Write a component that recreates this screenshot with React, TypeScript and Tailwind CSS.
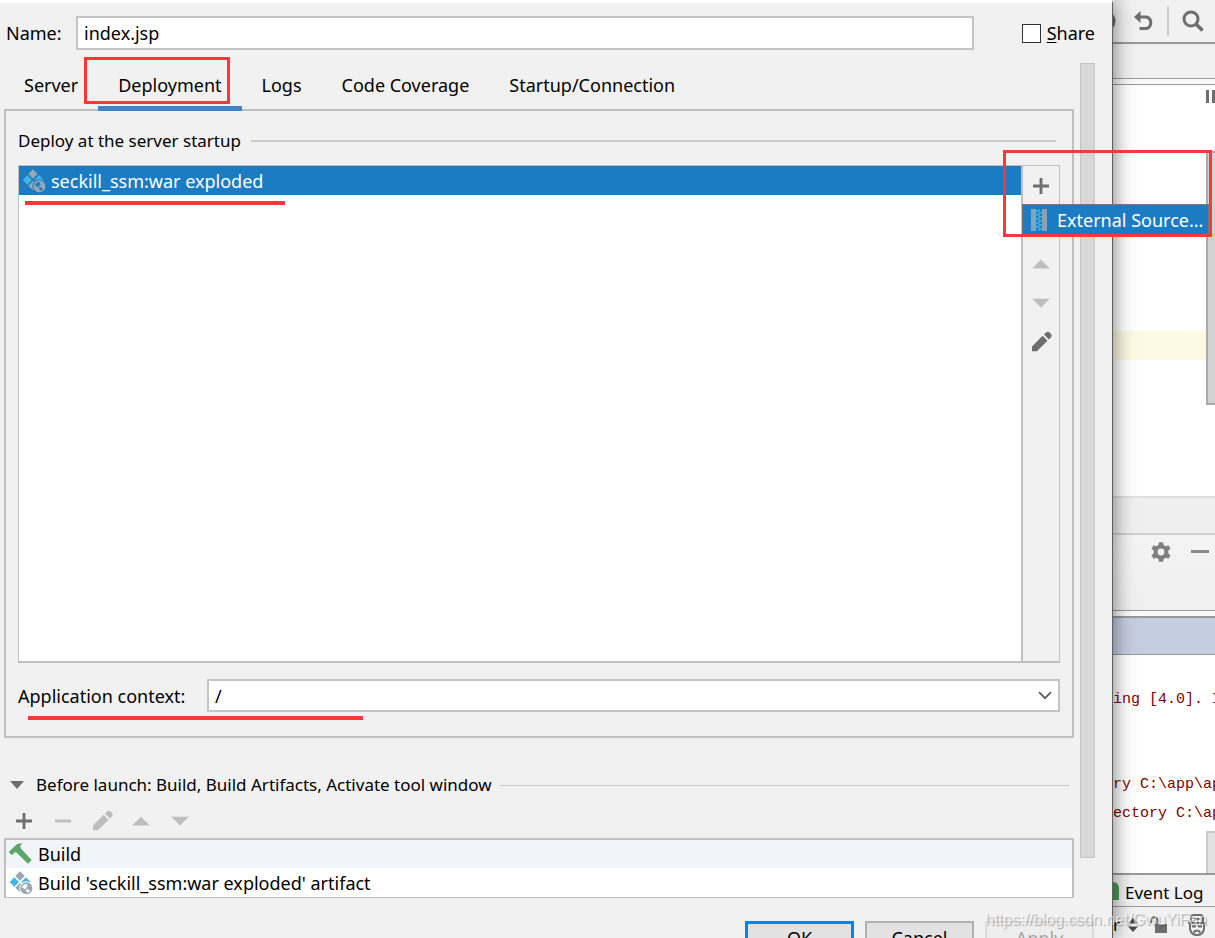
import type { ReactNode } from 'react';

const TABS = ['Server', 'Deployment', 'Logs', 'Code Coverage', 'Startup/Connection'];

function PlusIcon() {
    return (
        <svg width="24" height="24" viewBox="0 0 24 24" fill="currentColor" aria-hidden="true">
            <path d="M10.6 4h2.8v6.6H20v2.8h-6.6V20h-2.8v-6.6H4v-2.8h6.6z" />
        </svg>
    );
}

function MinusIcon() {
    return (
        <svg width="24" height="24" viewBox="0 0 24 24" fill="currentColor" aria-hidden="true">
            <path d="M4 10.6h16v2.8H4z" />
        </svg>
    );
}

function UpIcon() {
    return (
        <svg width="24" height="24" viewBox="0 0 24 24" fill="currentColor" aria-hidden="true">
            <path d="M12 7.7L20.8 16.5H3.2z" />
        </svg>
    );
}

function DownIcon() {
    return (
        <svg width="24" height="24" viewBox="0 0 24 24" fill="currentColor" aria-hidden="true">
            <path d="M12 16.5L3.2 7.7h17.6z" />
        </svg>
    );
}

function PencilIcon() {
    return (
        <svg width="24" height="24" viewBox="0 0 24 24" fill="currentColor" aria-hidden="true">
            <path d="M3 16.4L13.6 5.8L18.5 10.7L7.9 21.2H3z" />
            <path d="M15 4.5L17.1 2.4Q18.9 0.9 20.6 2.5L21.9 3.8Q23.5 5.5 22 7.2L19.9 9.4z" />
        </svg>
    );
}

function ArtifactIcon({ selected = false }: { selected?: boolean }) {
    const back = selected ? '#1b7cc3' : '#ffffff';
    return (
        <svg width="24" height="24" viewBox="66 27 72 72" className="shrink-0" aria-hidden="true">
            <path d="M99 28L113 42L99 56L85 42z" fill="#9aa7b0" />
            <path d="M82 46L96 60L82 74L68 60z" fill="#40b6e0" />
            <path d="M117 46L131 60L117 74L103 60z" fill="#40b6e0" />
            <path d="M99 63L113 77L99 91L85 77z" fill="#9aa7b0" />
            <circle cx="118" cy="79" r="21" fill={back} />
            <circle cx="118" cy="79" r="18" fill="#9aa7b0" />
            <path d="M105 77Q106 68 115 66L121 67L119 71L123 73L117 77L117 80L112 82L110 79z" fill={back} />
            <path d="M117 82L126 83L129 86Q125 92 120 93L119 88L116 86z" fill={back} />
        </svg>
    );
}

function HammerIcon() {
    return (
        <svg width="24" height="24" viewBox="22 126 72 72" className="shrink-0" aria-hidden="true">
            <path d="M24 156L44 137Q50 130 66 130L58 139L62 147L93 180L82 191L48 158L43 156L34 166z" fill="#59a869" />
        </svg>
    );
}

function ZipIcon() {
    return (
        <svg width="16" height="22" viewBox="0 0 16 22" className="shrink-0" aria-hidden="true">
            <path d="M0 0h5v22H0zM11 0h5v22h-5z" fill="#87a3b8" />
            <path
                d="M5 1h3v1.5H5zM8 3h3v1.5H8zM5 5h3v1.5H5zM8 7h3v1.5H8zM5 9h3v1.5H5zM8 11h3v1.5H8zM5 13h3v1.5H5zM8 15h3v1.5H8zM5 17h3v1.5H5zM8 19h3v1.5H8zM7.5 0h1v22h-1z"
                fill="#40b6e0"
            />
        </svg>
    );
}

function GearIcon() {
    return (
        <svg width="20" height="20" viewBox="-10 -10 20 20" fill="#7f7f7f" aria-hidden="true">
            <path d="M0-7.4A7.4 7.4 0 1 1 0 7.4A7.4 7.4 0 1 1 0-7.4zM0-3.4A3.4 3.4 0 1 0 0 3.4A3.4 3.4 0 1 0 0-3.4z" fillRule="evenodd" />
            {[0, 60, 120, 180, 240, 300].map((angle) => (
                <path key={angle} d="M-2.6-6L-2-9.8H2L2.6-6z" transform={`rotate(${angle})`} />
            ))}
        </svg>
    );
}

function ToolButton({ label, disabled, children }: { label: string; disabled?: boolean; children: ReactNode }) {
    return (
        <button
            type="button"
            aria-label={label}
            disabled={disabled}
            className="flex items-center justify-center text-[#6e6e6e] disabled:text-[#bdbdbd]"
        >
            {children}
        </button>
    );
}

function DeploymentPanel() {
    return (
        <section className="ml-1 border-2 border-[#bfbfbf] px-3 pb-6 pt-4">
            <div className="flex items-center gap-[10px] pr-1">
                <h2 className="text-[17px] leading-7">Deploy at the server startup</h2>
                <div className="h-[2px] flex-1 bg-[#cbcbcb]" />
            </div>

            <div className="mt-[10px] flex min-h-[498px] border border-b-2 border-[#bfbfbf] bg-white">
                <div className="flex-1">
                    <div className="relative flex h-[29px] items-center gap-[5px] bg-[#1b7cc3] pl-[3px] text-white">
                        <ArtifactIcon selected />
                        <span>seckill_ssm:war exploded</span>
                        <div className="absolute left-[6px] top-[35px] h-1 w-[260px] bg-[#fb3737]" />
                    </div>
                </div>
                <div className="relative flex w-[38px] flex-col items-stretch gap-[15px] border-l-2 border-[#bfbfbf] bg-[#f1f1f1] pt-2">
                    <ToolButton label="Add"><PlusIcon /></ToolButton>
                    <ToolButton label="Remove" disabled><MinusIcon /></ToolButton>
                    <ToolButton label="Move up" disabled><UpIcon /></ToolButton>
                    <ToolButton label="Move down" disabled><DownIcon /></ToolButton>
                    <ToolButton label="Edit"><PencilIcon /></ToolButton>
                    <button
                        type="button"
                        className="absolute left-[-1px] top-[38px] flex h-8 w-[187px] items-center gap-[10px] whitespace-nowrap border border-[#777777] bg-[#1b7cc3] pl-2 text-white"
                    >
                        <ZipIcon />
                        External Source...
                    </button>
                    <div className="pointer-events-none absolute left-[-20px] top-[-16px] h-[87px] w-[209px] border-[3px] border-[#fb3737]" />
                </div>
            </div>

            <div className="relative mt-4 flex items-center gap-4">
                <label htmlFor="context" className="w-[173px]">Application context:</label>
                <div className="relative flex-1">
                    <select
                        id="context"
                        className="block h-[33px] w-full appearance-none border-2 border-[#c4c4c4] bg-white px-[6px] leading-7 outline-none"
                    >
                        <option>/</option>
                    </select>
                    <svg width="14" height="9" viewBox="0 0 14 9" className="pointer-events-none absolute right-2 top-3" aria-hidden="true">
                        <path d="M1 1.2L7 7.2L13 1.2" fill="none" stroke="#5e5e5e" strokeWidth="1.8" />
                    </svg>
                </div>
                <div className="absolute left-[10px] top-[37px] h-1 w-[335px] bg-[#fb3737]" />
            </div>
        </section>
    );
}

function BeforeLaunch() {
    return (
        <section className="pt-[33px]">
            <div className="flex items-center pr-[5px]">
                <svg width="14" height="8" viewBox="0 0 14 8" className="ml-[10px] mr-3" aria-hidden="true">
                    <path d="M0 0h14L7 8z" fill="#6e6e6e" />
                </svg>
                <h2 className="text-[17px] leading-7">Before launch: Build, Build Artifacts, Activate tool window</h2>
                <div className="ml-2 h-px flex-1 bg-[#c8c8c8]" />
            </div>
            <div className="mt-[10px] flex gap-[15px] pl-3">
                <ToolButton label="Add task"><PlusIcon /></ToolButton>
                <ToolButton label="Remove task" disabled><MinusIcon /></ToolButton>
                <ToolButton label="Edit task" disabled><PencilIcon /></ToolButton>
                <ToolButton label="Move task up" disabled><UpIcon /></ToolButton>
                <ToolButton label="Move task down" disabled><DownIcon /></ToolButton>
            </div>
            <ul className="ml-1 mt-[5px] border-2 border-b border-[#bfbfbf] bg-white">
                <li className="flex h-7 items-center gap-[6px] bg-[#f1f5fa] pl-[2px]">
                    <HammerIcon />
                    Build
                </li>
                <li className="flex h-[29px] items-center gap-[5px] pl-[3px]">
                    <ArtifactIcon />
                    Build 'seckill_ssm:war exploded' artifact
                </li>
            </ul>
        </section>
    );
}

function Dialog() {
    return (
        <main className="z-10 flex min-w-0 flex-1 flex-col border-r border-t-[3px] border-r-[#606060] border-t-white bg-[#f1f1f1] shadow-[0_0_20px_rgba(0,0,0,0.55)]">
            <div className="flex items-center pl-[6px] pr-[17px] pt-[13px]">
                <label htmlFor="name" className="w-[70px]">Name:</label>
                <input
                    id="name"
                    defaultValue="index.jsp"
                    className="h-[34px] min-w-0 flex-1 border-2 border-[#c4c4c4] bg-white px-[6px] outline-none"
                />
                <label className="ml-12 flex items-center gap-[6px]">
                    <input type="checkbox" className="size-[19px] appearance-none border border-[#333333] bg-white" />
                    <span><span className="underline underline-offset-2">S</span>hare</span>
                </label>
            </div>

            <div className="flex gap-[6px] pr-[17px]">
                <div className="min-w-0 flex-1">
                    <div role="tablist" className="ml-1 flex h-[59px] pt-[10px]">
                        {TABS.map((tab) => (
                            <button key={tab} type="button" role="tab" aria-selected={tab === 'Deployment'} className="relative px-5">
                                {tab}
                                {tab === 'Deployment' && (
                                    <>
                                        <span className="absolute inset-x-0 bottom-[-2px] h-[5px] bg-[#4083c9]" />
                                        <span className="absolute left-[-14px] right-3 bottom-[5px] h-[47px] border-[3px] border-[#fb3737]" />
                                    </>
                                )}
                            </button>
                        ))}
                    </div>
                    <DeploymentPanel />
                    <BeforeLaunch />
                </div>
                <div className="mb-10 mt-[13px] w-[15px] border border-r-2 border-[#c4c4c4] border-r-[#cfcfcf] bg-[#d8d8d8]" />
            </div>

            <div className="mt-[23px] flex justify-end gap-[11px] pr-[18px]">
                <button type="button" className="h-[33px] w-[109px] border-[3px] border-[#0a84e0] bg-[#e2e2e2]">OK</button>
                <button type="button" className="h-[33px] w-[109px] border-2 border-[#b0b0b0] bg-[#e2e2e2]">Cancel</button>
                <button type="button" disabled className="h-[33px] w-[109px] border-2 border-[#dadada] bg-[#ededed] text-[#a5a5a5]">Apply</button>
            </div>
        </main>
    );
}

function IdeStrip() {
    return (
        <aside className="flex w-[102px] shrink-0 flex-col overflow-hidden bg-[#f1f1f1]">
            <div className="flex h-11 shrink-0 items-center border-b-2 border-[#999999]">
                <svg width="3" height="14" viewBox="0 0 3 14" aria-hidden="true">
                    <path d="M0 0Q5 7 0 14z" fill="#6e6e6e" />
                </svg>
                <button type="button" aria-label="Undo" className="ml-[18px]">
                    <svg width="20" height="20" viewBox="0 0 20 20" aria-hidden="true">
                        <path d="M0 6L6.5 0v12z" fill="#6e6e6e" />
                        <path d="M5 6h7.5a6 6 0 0 1 0 11.5H5.5" fill="none" stroke="#6e6e6e" strokeWidth="3" />
                    </svg>
                </button>
                <div className="ml-[13px] h-[30px] w-[2px] bg-[#cbcbcb]" />
                <button type="button" aria-label="Search" className="ml-[13px]">
                    <svg width="22" height="22" viewBox="0 0 22 22" fill="none" stroke="#6e6e6e" strokeWidth="3" aria-hidden="true">
                        <circle cx="9" cy="9" r="7" />
                        <path d="M14 14l6.5 6.5" strokeWidth="3.6" />
                    </svg>
                </button>
            </div>
            <div className="h-[35px] shrink-0 border-b border-[#999999]" />
            <div className="h-[6px] shrink-0 border-b border-[#999999] bg-[#fafafa]" />

            <div className="flex h-[411px] shrink-0 flex-col bg-white">
                <div className="flex h-[66px] justify-end pt-[5px]">
                    <svg width="9" height="13" viewBox="0 0 9 13" aria-hidden="true">
                        <path d="M0 0h3v13H0zM6 0h3v13H6z" fill="#6e6e6e" />
                    </svg>
                </div>
                <div className="flex h-[254px]">
                    <div className="flex-1 pt-[180px]">
                        <div className="h-[29px] bg-[#fef9e3]" />
                    </div>
                    <div className="w-[9px] border-2 border-r-0 border-[#aaaaaa] bg-[#d2d2d2] pt-20">
                        <div className="h-[3px] bg-[#d5c88c]" />
                    </div>
                </div>
            </div>

            <div className="h-[37px] shrink-0 border-t-2 border-[#e0e0e0] bg-[#efefef]" />
            <div className="flex h-[77px] shrink-0 items-start border-t-2 border-[#cfcfcf] bg-linear-to-b from-[#f4f4f4] to-[#efefef] pl-[38px] pt-[7px]">
                <button type="button" aria-label="Settings"><GearIcon /></button>
                <button type="button" aria-label="Hide" className="ml-5 mt-2 h-[3px] w-[18px] bg-[#8a8a8a]" />
            </div>
            <div className="h-[6px] shrink-0 border-t border-[#999999] bg-[#fafafa]" />
            <div className="h-[39px] shrink-0 border-b border-t-2 border-[#999999] bg-[#c5cee0]" />

            <div className="relative h-[218px] shrink-0 whitespace-pre bg-white pt-[30px] font-['Liberation_Mono',monospace] text-[15px] leading-[29px] text-[#7f0000]">
                <p>ing [4.0]. In</p>
                <p className="mt-14">ry C:\app\apache</p>
                <p>ectory C:\apache</p>
                <div className="absolute bottom-0 right-0 h-[42px] w-[9px] border-2 border-b-0 border-r-0 border-[#c8c8c8] bg-[#e2e2e2]" />
            </div>

            <div className="flex h-[34px] shrink-0 items-center border-b border-t-2 border-[#999999]">
                <div className="h-[18px] w-[6px] rounded-tr-md bg-[#499c54]" />
                <button type="button" className="ml-[6px] whitespace-nowrap pt-1 text-[17px]">Event Log</button>
            </div>
            <div className="flex h-9 shrink-0 items-center text-[17px]">
                <span>r</span>
                <svg width="10" height="14" viewBox="0 0 10 14" className="ml-2" fill="#4d4d4d" aria-hidden="true">
                    <path d="M5 0l5 5.5H0zM5 14L0 8.5h10z" />
                </svg>
                <svg width="18" height="18" viewBox="0 0 18 18" className="ml-3" aria-hidden="true">
                    <path d="M5 8h12v9H5z" fill="#6e6e6e" />
                    <path d="M1.2 7V4Q1.2 1.2 4 1.2T7.5 4v5" fill="none" stroke="#6e6e6e" strokeWidth="2" />
                </svg>
                <svg width="18" height="22" viewBox="0 0 18 22" className="ml-5" fill="none" stroke="#6e6e6e" strokeWidth="2" aria-hidden="true">
                    <path d="M3 8V4Q3 1 6 1h6q3 0 3 3v4M0 9h18" />
                    <path d="M2 10v5q1 6 7 6t7-6v-5" />
                    <path d="M4 12.5h4M10 12.5h4M5.5 18.5q3.5-4 7 0M6 5h6" />
                </svg>
            </div>
        </aside>
    );
}

export default function App() {
    return (
        <div className="relative flex h-screen overflow-hidden font-['Noto_Sans','Noto_Sans_CJK_SC',sans-serif] text-lg leading-7 text-black">
            <Dialog />
            <IdeStrip />
            <p className="pointer-events-none absolute bottom-1 right-2 z-20 font-['Liberation_Sans',sans-serif] text-[16px] leading-7 text-white/60 [text-shadow:1px_1px_1px_rgba(0,0,0,0.3)]">
                https://blog.csdn.net/GwuYiFan
            </p>
        </div>
    );
}
